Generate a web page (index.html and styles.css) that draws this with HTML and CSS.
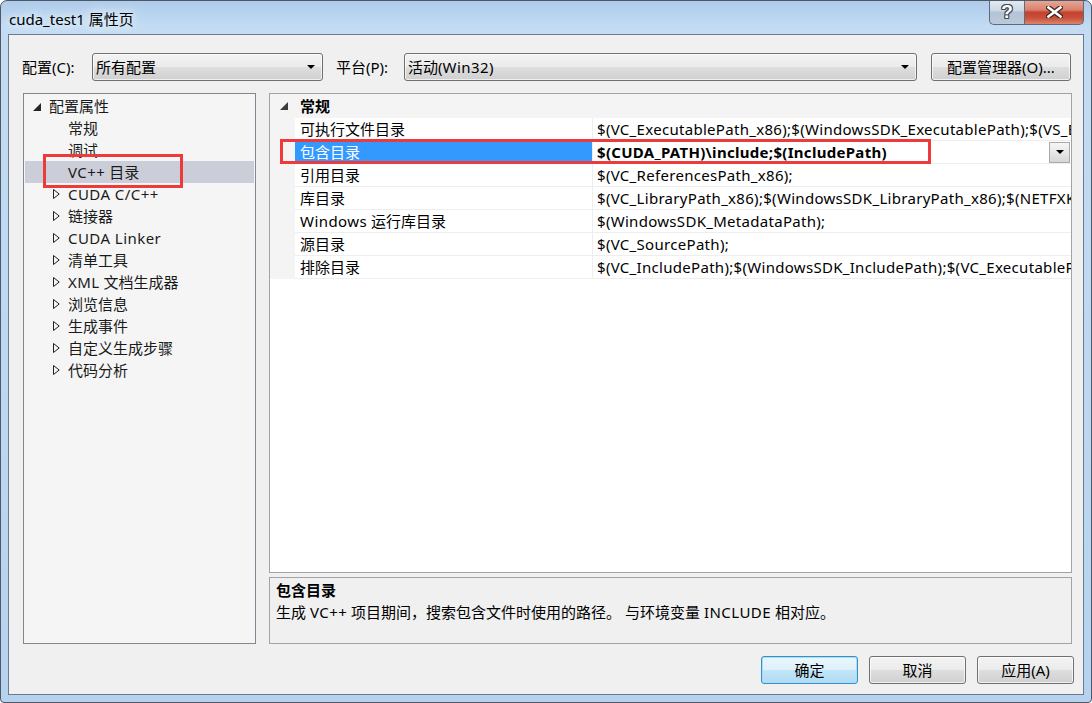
FILE: index.html
```html
<!DOCTYPE html>
<html lang="zh-CN">
<head>
<meta charset="utf-8">
<title>cuda_test1 属性页</title>
<link rel="stylesheet" href="styles.css">
</head>
<body>
<div class="window">
  <div class="titlebar">
    <span class="title">cuda_test1 属性页</span>
    <div class="caption">
      <div class="cbtn help"><span class="qmark">?</span></div>
      <div class="cbtn close">
        <svg width="17" height="12" viewBox="0 0 17 12"><path d="M2.5 1.5 L14.5 10.5 M14.5 1.5 L2.5 10.5" stroke="#3b2622" stroke-width="5" stroke-linecap="square" fill="none"/><path d="M2.5 1.5 L14.5 10.5 M14.5 1.5 L2.5 10.5" stroke="#ffffff" stroke-width="2.6" stroke-linecap="square" fill="none"/></svg>
      </div>
    </div>
  </div>
  <div class="client">
    <div class="toolbar">
      <span class="lbl lbl1">配置(C):</span>
      <div class="combo combo1"><span class="ctext">所有配置</span><svg class="carrow" width="8" height="4" viewBox="0 0 8 4"><polygon points="0,0 8,0 4,4" fill="#000"/></svg></div>
      <span class="lbl lbl2">平台(P):</span>
      <div class="combo combo2"><span class="ctext">活动(<span class="lat">Win32</span>)</span><svg class="carrow" width="8" height="4" viewBox="0 0 8 4"><polygon points="0,0 8,0 4,4" fill="#000"/></svg></div>
      <div class="btn cfgbtn">配置管理器(O)...</div>
    </div>
    <div class="main">
      <div class="tree">
        <div class="node l0"><span class="tw0"><svg width="8" height="8" viewBox="0 0 8 8"><polygon points="8,0 8,8 0,8" fill="#262626"/></svg></span>配置属性</div>
        <div class="node l1"><span class="tw"></span>常规</div>
        <div class="node l1"><span class="tw"></span>调试</div>
        <div class="node l1 sel"><span class="tw"></span><span class="lat">VC++</span>&nbsp;目录</div>
        <div class="node l1"><span class="tw"><svg width="7" height="10" viewBox="0 0 7 10"><polygon points="0.5,0.5 6.2,5 0.5,9.5" fill="none" stroke="#1e1e1e" stroke-width="1"/></svg></span><span class="lat">CUDA C/C++</span></div>
        <div class="node l1"><span class="tw"><svg width="7" height="10" viewBox="0 0 7 10"><polygon points="0.5,0.5 6.2,5 0.5,9.5" fill="none" stroke="#1e1e1e" stroke-width="1"/></svg></span>链接器</div>
        <div class="node l1"><span class="tw"><svg width="7" height="10" viewBox="0 0 7 10"><polygon points="0.5,0.5 6.2,5 0.5,9.5" fill="none" stroke="#1e1e1e" stroke-width="1"/></svg></span><span class="lat">CUDA Linker</span></div>
        <div class="node l1"><span class="tw"><svg width="7" height="10" viewBox="0 0 7 10"><polygon points="0.5,0.5 6.2,5 0.5,9.5" fill="none" stroke="#1e1e1e" stroke-width="1"/></svg></span>清单工具</div>
        <div class="node l1"><span class="tw"><svg width="7" height="10" viewBox="0 0 7 10"><polygon points="0.5,0.5 6.2,5 0.5,9.5" fill="none" stroke="#1e1e1e" stroke-width="1"/></svg></span><span class="lat">XML</span>&nbsp;文档生成器</div>
        <div class="node l1"><span class="tw"><svg width="7" height="10" viewBox="0 0 7 10"><polygon points="0.5,0.5 6.2,5 0.5,9.5" fill="none" stroke="#1e1e1e" stroke-width="1"/></svg></span>浏览信息</div>
        <div class="node l1"><span class="tw"><svg width="7" height="10" viewBox="0 0 7 10"><polygon points="0.5,0.5 6.2,5 0.5,9.5" fill="none" stroke="#1e1e1e" stroke-width="1"/></svg></span>生成事件</div>
        <div class="node l1"><span class="tw"><svg width="7" height="10" viewBox="0 0 7 10"><polygon points="0.5,0.5 6.2,5 0.5,9.5" fill="none" stroke="#1e1e1e" stroke-width="1"/></svg></span>自定义生成步骤</div>
        <div class="node l1"><span class="tw"><svg width="7" height="10" viewBox="0 0 7 10"><polygon points="0.5,0.5 6.2,5 0.5,9.5" fill="none" stroke="#1e1e1e" stroke-width="1"/></svg></span>代码分析</div>
        <div class="redbox tree-red"></div>
      </div>
      <div class="right">
        <div class="grid">
          <div class="cat"><span class="catarrow"><svg width="8" height="8" viewBox="0 0 8 8"><polygon points="8,0 8,8 0,8" fill="#3c3c3c"/></svg></span><span class="catname">常规</span></div>
          <div class="prow"><span class="gut"></span><span class="pname">可执行文件目录</span><span class="pval"><span class="vtext">$(VC_ExecutablePath_x86);$(WindowsSDK_ExecutablePath);$(VS_ExecutablePath);$(MSBuild_ExecutablePath);$(SystemRoot)\SysWow64;$(FxCopDir);$(PATH);</span></span></div>
          <div class="prow selrow"><span class="gut"></span><span class="pname">包含目录</span><span class="pval"><span class="vtext bold">$(CUDA_PATH)\include;$(IncludePath)</span><span class="ddbtn"><svg width="8" height="4" viewBox="0 0 8 4"><polygon points="0,0 8,0 4,4" fill="#000"/></svg></span></span></div>
          <div class="prow"><span class="gut"></span><span class="pname">引用目录</span><span class="pval"><span class="vtext">$(VC_ReferencesPath_x86);</span></span></div>
          <div class="prow"><span class="gut"></span><span class="pname">库目录</span><span class="pval"><span class="vtext">$(VC_LibraryPath_x86);$(WindowsSDK_LibraryPath_x86);$(NETFXKitsDir)Lib\um\x86</span></span></div>
          <div class="prow"><span class="gut"></span><span class="pname"><span class="lat">Windows</span> 运行库目录</span><span class="pval"><span class="vtext">$(WindowsSDK_MetadataPath);</span></span></div>
          <div class="prow"><span class="gut"></span><span class="pname">源目录</span><span class="pval"><span class="vtext">$(VC_SourcePath);</span></span></div>
          <div class="prow"><span class="gut"></span><span class="pname">排除目录</span><span class="pval"><span class="vtext">$(VC_IncludePath);$(WindowsSDK_IncludePath);$(VC_ExecutablePath_x86);$(MSBuildToolsPath)</span></span></div>
          <div class="redbox grid-red"></div>
        </div>
        <div class="desc">
          <div class="dtitle">包含目录</div>
          <div class="dtext">生成 <span class="lat">VC++</span> 项目期间，搜索包含文件时使用的路径。 与环境变量 <span class="lat">INCLUDE</span> 相对应。</div>
        </div>
      </div>
    </div>
    <div class="buttons">
      <div class="btn dbtn default">确定</div>
      <div class="btn dbtn">取消</div>
      <div class="btn dbtn">应用(A)</div>
    </div>
  </div>
</div>
</body>
</html>
```

FILE: styles.css
```css
* { box-sizing: border-box; }

body {
  margin: 0;
  font-family: "Noto Sans", "Noto Sans CJK SC", sans-serif;
  font-size: 15px;
  color: #000;
  background: #ffffff;
}

.lat { letter-spacing: 0.45px; }

.window {
  width: 1092px;
  height: 703px;
  border: 1px solid #4f5966;
  border-radius: 7px 7px 4px 4px;
  background: linear-gradient(180deg, #aecbea 0px, #c3dcf4 26px, #bdd7f0 60%, #b6d2ef 100%);
  display: flex;
  flex-direction: column;
  overflow: hidden;
}

.titlebar {
  height: 33px;
  flex: none;
  display: flex;
  align-items: flex-start;
}

.title {
  margin: 8px 0 0 8px;
  line-height: 20px;
  font-size: 15px;
  color: #000;
  text-shadow: 0 0 6px #e8f3fd, 0 0 10px #e8f3fd, 0 0 16px #e8f3fd;
}

.caption {
  margin-left: auto;
  margin-right: 7px;
  margin-top: -1px;
  display: flex;
  height: 25px;
}

.cbtn {
  height: 25px;
  display: flex;
  align-items: center;
  justify-content: center;
  border: 1px solid #5d6b7c;
  border-top: none;
}

.help {
  width: 35px;
  border-right: none;
  border-radius: 0 0 0 5px;
  background: linear-gradient(180deg, #e4ebf3 0%, #ccd8e4 45%, #b4c4d5 50%, #bccada 100%);
}

.qmark {
  font-family: "Liberation Sans", sans-serif;
  font-weight: bold;
  font-size: 19px;
  line-height: 20px;
  color: #fff;
  text-shadow: -1px 0 0 #3f4a57, 1px 0 0 #3f4a57, 0 -1px 0 #3f4a57, 0 1px 0 #3f4a57,
               -1px -1px 0 #3f4a57, 1px 1px 0 #3f4a57, -1px 1px 0 #3f4a57, 1px -1px 0 #3f4a57;
}

.close {
  width: 60px;
  border-radius: 0 0 5px 0;
  background: linear-gradient(180deg, #e9ab9b 0%, #d9826d 40%, #c4432e 52%, #c9503a 75%, #dc8468 100%);
}

.client {
  flex: 1;
  margin: 0 7px 7px 7px;
  border: 1px solid #6b7a8c;
  background: #f0f0f0;
  padding: 18px 9px 10px 13px;
  display: flex;
  flex-direction: column;
}

/* toolbar */
.toolbar {
  display: flex;
  align-items: center;
  height: 28px;
  flex: none;
}

.lbl { line-height: 20px; white-space: nowrap; }
.lbl1 { width: 70px; }
.lbl2 { width: 68px; margin-left: 13px; }

.combo {
  height: 28px;
  border: 1px solid #707070;
  border-radius: 3px;
  background: linear-gradient(180deg, #f3f3f3 0%, #ebebeb 50%, #dedede 50%, #d0d0d0 100%);
  box-shadow: inset 0 0 0 1px rgba(255,255,255,0.65);
  display: flex;
  align-items: center;
  padding: 0 7px 0 3px;
}
.combo1 { width: 231px; }
.combo2 { width: 513px; }
.ctext { flex: 1; line-height: 20px; }
.carrow { flex: none; }

.btn {
  height: 28px;
  border: 1px solid #707070;
  border-radius: 3px;
  background: linear-gradient(180deg, #f3f3f3 0%, #ebebeb 50%, #dedede 50%, #d0d0d0 100%);
  box-shadow: inset 0 0 0 1px rgba(255,255,255,0.7);
  display: flex;
  align-items: center;
  justify-content: center;
  line-height: 20px;
  white-space: nowrap;
}
.cfgbtn { width: 140px; margin-left: 14px; }

/* main */
.main {
  display: flex;
  margin-top: 12px;
  margin-left: 1px;
  height: 551px;
  flex: none;
}

.tree {
  position: relative;
  width: 233px;
  height: 551px;
  border: 1px solid #828790;
  background: #f5f5f5;
  padding: 1px 1px 0 1px;
}

.node {
  height: 22px;
  line-height: 22px;
  display: flex;
  align-items: center;
  white-space: nowrap;
  color: #1a1a1a;
}
.node.l0 { padding-left: 8px; }
.node.l1 { padding-left: 28px; }
.tw0 { width: 16px; display: flex; align-items: center; padding-top: 2px; }
.tw { width: 15px; display: flex; align-items: center; flex: none; }
.node.sel { background: #cbcdd9; }

.redbox {
  position: absolute;
  border: 3px solid #ef3a3b;
  pointer-events: none;
}
.tree-red { left: 19px; top: 60px; width: 140px; height: 34px; }

.right {
  margin-left: 13px;
  width: 803px;
  display: flex;
  flex-direction: column;
}

.grid {
  position: relative;
  height: 480px;
  border: 1px solid #a3a3a3;
  background: #ffffff;
}

.cat {
  height: 24px;
  background: #f4f4f4;
  display: flex;
  align-items: center;
}
.catarrow { width: 30px; padding-left: 10px; display: flex; align-items: center; }
.catname { font-weight: bold; line-height: 20px; }

.prow {
  height: 23px;
  display: flex;
}
.gut { width: 25px; flex: none; background: #f4f4f4; }
.pname {
  width: 298px;
  flex: none;
  padding-left: 5px;
  line-height: 22px;
  border-right: 1px solid #eeeeee;
  border-bottom: 1px solid #eeeeee;
  white-space: nowrap;
}
.pval {
  flex: 1;
  min-width: 0;
  display: flex;
  align-items: center;
  padding-left: 4px;
  border-bottom: 1px solid #eeeeee;
  overflow: hidden;
}
.vtext {
  flex: 1;
  min-width: 0;
  white-space: nowrap;
  overflow: hidden;
  line-height: 22px;
  letter-spacing: 0.3px;
}
.bold { font-weight: bold; }
.selrow .pname { background: #3399ff; color: #ffffff; }

.ddbtn {
  flex: none;
  width: 21px;
  height: 21px;
  margin-right: 1px;
  border: 1px solid #a9a9a9;
  background: linear-gradient(180deg, #f6f6f6 0%, #e8e8e8 50%, #d6d6d6 100%);
  display: flex;
  align-items: center;
  justify-content: center;
}

.grid-red { left: 10px; top: 45px; width: 651px; height: 25px; }

.desc {
  margin-top: 4px;
  height: 67px;
  border: 1px solid #a3a3a3;
  background: #f0f0f0;
  padding: 1px 6px;
}
.dtitle { font-weight: bold; line-height: 22px; }
.dtext { line-height: 22px; white-space: nowrap; }

/* buttons */
.buttons {
  display: flex;
  justify-content: flex-end;
  gap: 11px;
  margin-top: 12px;
  flex: none;
}
.dbtn { width: 97px; }
.dbtn.default {
  border-color: #3c8fc4;
  background: linear-gradient(180deg, #ebf6fd 0%, #dcf0fb 50%, #c2e5f8 50%, #b0dcf4 100%);
  box-shadow: inset 0 0 0 1px #a5def8;
}
```
